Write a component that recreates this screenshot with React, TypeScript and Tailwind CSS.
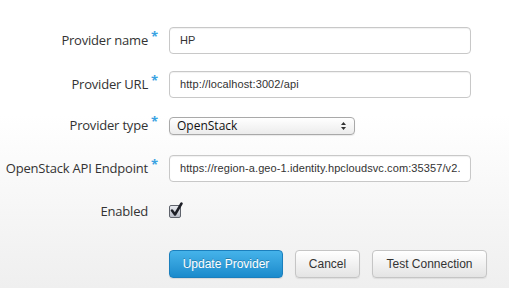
import { useState } from 'react';

const labelFont = "font-['Open_Sans','DejaVu_Sans',sans-serif]";
const fieldFont = "font-['Liberation_Sans',Arial,sans-serif]";

function Label({ text, required }: { text: string; required?: boolean }) {
  return (
    <div className={`w-[169px] shrink-0 flex justify-end pr-[21px] ${labelFont}`}>
      <span className="relative text-[13px] text-[#333] tracking-[-0.2px]">
        {text}
        {required && (
          <span className="absolute -right-[10px] -top-[4px] text-[13px] text-[#3aa2e2] font-bold">*</span>
        )}
      </span>
    </div>
  );
}

function TextField({ value }: { value: string }) {
  return (
    <div className="w-[302px] h-[27px] flex items-center pl-[10px] bg-white border border-[#c8c8c8] rounded-[4px] shadow-[inset_0_1px_1px_rgba(0,0,0,0.06)]">
      <span className={`w-[280px] overflow-hidden whitespace-nowrap text-[11px] tracking-[0.1px] text-[#333] ${fieldFont}`}>
        {value}
      </span>
    </div>
  );
}

function SelectBox({ value }: { value: string }) {
  return (
    <div
      className={`w-[186px] h-[18px] flex items-center justify-between pl-[7px] pr-[7px] bg-gradient-to-b from-white to-[#ececec] border border-[#a9a9a9] rounded-[4px] shadow-[0_1px_1px_rgba(0,0,0,0.08)] text-[12px] text-[#111] ${labelFont}`}
    >
      <span>{value}</span>
      <svg width="7" height="10" viewBox="0 0 7 10">
        <path d="M3.5 1 L6 4 H1 Z" fill="#333" />
        <path d="M3.5 9 L6 6 H1 Z" fill="#333" />
      </svg>
    </div>
  );
}

function CheckMark() {
  return (
    <div className="relative w-[12px] h-[13px] bg-gradient-to-b from-[#e9ebf0] to-[#b9bdc7] border border-[#5f636c] rounded-[2px]">
      <svg className="absolute -left-[1px] -top-[4px]" width="15" height="16" viewBox="0 0 15 16">
        <path d="M3 8.5 L6 12.5 L12.5 1.5" stroke="#1d1f26" strokeWidth="2.5" fill="none" strokeLinecap="round" strokeLinejoin="round" />
      </svg>
    </div>
  );
}

export default function App() {
  const [enabled] = useState(true);

  return (
    <div className="w-[509px] h-[288px] overflow-hidden bg-gradient-to-b from-white from-40% to-[#efefef]">
      <div className="flex flex-col pt-[27px]">
        <div className="flex items-center h-[27px]">
          <Label text="Provider name" required />
          <TextField value="HP" />
        </div>
        <div className="flex items-center h-[27px] mt-[17px]">
          <Label text="Provider URL" required />
          <TextField value="http://localhost:3002/api" />
        </div>
        <div className="flex items-center h-[27px] mt-[14px]">
          <Label text="Provider type" required />
          <SelectBox value="OpenStack" />
        </div>
        <div className="flex items-center h-[27px] mt-[16px]">
          <Label text="OpenStack API Endpoint" required />
          <TextField value="https://region-a.geo-1.identity.hpcloudsvc.com:35357/v2.0" />
        </div>
        <div className="flex items-center h-[27px] mt-[16px]">
          <Label text="Enabled" />
          {enabled && <CheckMark />}
        </div>
        <div className={`flex items-center gap-[12px] pl-[169px] mt-[25px] text-[12px] ${fieldFont}`}>
          <button className="w-[114px] h-[28px] rounded-[4px] border border-[#1b7fbd] bg-gradient-to-b from-[#45b3ea] to-[#1a8bcc] text-white [text-shadow:0_-1px_0_rgba(0,0,0,0.25)] shadow-[0_1px_1px_rgba(0,0,0,0.1)]">
            Update Provider
          </button>
          <button className="w-[65px] h-[28px] rounded-[4px] border border-[#c5c5c5] bg-gradient-to-b from-white to-[#e4e4e4] text-[#333] shadow-[0_1px_1px_rgba(0,0,0,0.08)]">
            Cancel
          </button>
          <button className="w-[115px] h-[28px] rounded-[4px] border border-[#c5c5c5] bg-gradient-to-b from-white to-[#e4e4e4] text-[#333] shadow-[0_1px_1px_rgba(0,0,0,0.08)]">
            Test Connection
          </button>
        </div>
      </div>
    </div>
  );
}
